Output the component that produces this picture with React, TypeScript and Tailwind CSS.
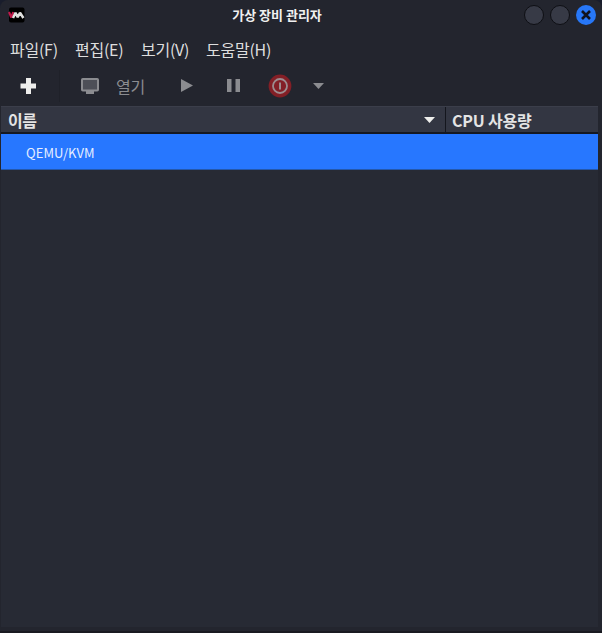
const menus = [
  { label: '파일(F)', width: 'w-[65px]' },
  { label: '편집(E)', width: 'w-[66px]' },
  { label: '보기(V)', width: 'w-[65px]' },
  { label: '도움말(H)', width: 'w-[80px]' },
];

function TitleBar() {
  return (
    <header className="grid h-[30px] shrink-0 grid-cols-[1fr_auto_1fr] items-center">
      <svg className="ml-2 block h-4 w-[18px]" viewBox="0 0 18 16">
        <rect x="1" y="0.5" width="15.5" height="15" rx="2" fill="#000" />
        <path d="M1 5 L3.3 10.5 L5.2 5" fill="none" stroke="#c2184b" strokeWidth="2.1" strokeLinejoin="bevel" />
        <path d="M5 11 L7.5 5.8 L9.7 10.3 L12 5.8 L15.4 11" fill="none" stroke="#e0e0e0" strokeWidth="2.5" strokeLinejoin="bevel" />
      </svg>
      <h1 className="pr-[48px] pb-px text-[13px] leading-5 font-bold whitespace-nowrap text-[#f0f0f0]">
        가상 장비 관리자
      </h1>
      <div className="flex justify-end gap-[6px] pr-[6px]">
        <span className="size-5 rounded-full border border-[#0e0f14] bg-[#373a46]" />
        <span className="size-5 rounded-full border border-[#0e0f14] bg-[#373a46]" />
        <span className="flex size-5 items-center justify-center rounded-full bg-[#2777f7]">
          <svg className="size-[10px]" viewBox="0 0 10 10">
            <path d="M1 1 L9 9 M9 1 L1 9" stroke="#10131d" strokeWidth="2.6" />
          </svg>
        </span>
      </div>
    </header>
  );
}

function Toolbar() {
  return (
    <div className="flex h-[41px] shrink-0 items-center text-[#8b8c90]">
      <svg className="ml-5 size-4" viewBox="0 0 16 16">
        <path d="M6 0h5v5.500h5v5h-5V16H6v-5.500H0.500v-5H6z" fill="#eeeeec" />
      </svg>
      <span className="ml-[23px] h-8 w-px bg-[#1f2129]" />
      <svg className="ml-[21px] h-4 w-[18px]" viewBox="0 0 18 16">
        <rect x="1" y="1" width="16" height="11.5" rx="0.8" fill="#4d4f57" stroke="#8b8c90" strokeWidth="2" />
        <path d="M5 13h8v3H5z" fill="#8b8c90" />
      </svg>
      <span className="ml-[17px] w-[32px] text-base tracking-[-0.25px] whitespace-nowrap">열기</span>
      <svg className="ml-[33px] h-[13px] w-3" viewBox="0 0 12 13">
        <path d="M0 0L12 6.5L0 13z" fill="currentColor" />
      </svg>
      <svg className="ml-[34px] h-[13px] w-[13px]" viewBox="0 0 13 13">
        <path d="M0 0h4.5v13H0zM8.5 0H13v13H8.500z" fill="currentColor" />
      </svg>
      <svg className="ml-[28px] size-6" viewBox="0 0 24 24">
        <circle cx="12" cy="12" r="11.4" fill="#831f26" />
        <circle cx="12" cy="12" r="7" fill="none" stroke="#9c8d90" strokeWidth="1.8" />
        <path d="M12 8.500v7" stroke="#9c8d90" strokeWidth="2" />
      </svg>
      <svg className="ml-[21px] h-[6px] w-[11px]" viewBox="0 0 11 6">
        <path d="M0 0h11L5.500 6z" fill="currentColor" />
      </svg>
    </div>
  );
}

export default function App() {
  return (
    <div className="flex h-[633px] w-[602px] flex-col overflow-hidden bg-[#191d2c]">
      <div className="flex flex-1 flex-col rounded-t-lg border-b-2 border-[#191a21] bg-[#23252e] font-['Noto_Sans_CJK_KR','Noto_Sans',sans-serif]">
        <TitleBar />
        <nav className="flex h-[35px] shrink-0 items-center pt-[2px] pl-[10px] text-base tracking-[-0.25px] text-[#dedede]">
          {menus.map((menu) => (
            <span key={menu.label} className={`${menu.width} whitespace-nowrap`}>{menu.label}</span>
          ))}
        </nav>
        <Toolbar />
        <main className="mr-1 mb-1 ml-px flex flex-1 flex-col bg-[#272a34]">
          <div className="flex h-[28px] shrink-0 border-t border-b-2 border-t-[#3b3e4a] border-b-[#151821] bg-[#333642] text-base font-bold text-[#e4e4e4]">
            <div className="flex w-[445px] items-center justify-between border-r border-[#14161d] pr-[10px] pl-[7px]">
              <span className="tracking-[-0.5px]">이름</span>
              <svg className="h-[6px] w-[11px]" viewBox="0 0 11 6">
                <path d="M0 0h11L5.500 6z" fill="#eeeeec" />
              </svg>
            </div>
            <div className="flex flex-1 items-center pl-[6px] tracking-[-0.2px]">CPU 사용량</div>
          </div>
          <div className="flex h-9 shrink-0 items-center border-b border-[#2458ac] bg-[#2777ff] pt-[2px] pl-[25px] text-[13px] tracking-[0.05px] text-[#e6eeff]">
            QEMU/KVM
          </div>
        </main>
      </div>
    </div>
  );
}
